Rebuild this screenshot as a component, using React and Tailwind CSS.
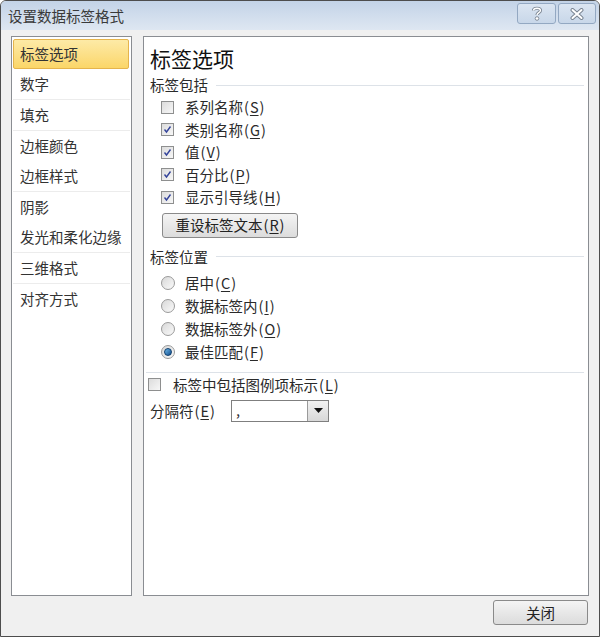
import React from "react";

const font = { fontFamily: '"Noto Sans CJK SC", "Noto Sans", sans-serif' };

const navItems = [
  { label: "标签选项", active: true, sep: false },
  { label: "数字", sep: true },
  { label: "填充", sep: true },
  { label: "边框颜色", sep: false },
  { label: "边框样式", sep: true },
  { label: "阴影", sep: false },
  { label: "发光和柔化边缘", sep: true },
  { label: "三维格式", sep: true },
  { label: "对齐方式", sep: false },
];

const checks = [
  { label: "系列名称", key: "S", checked: false },
  { label: "类别名称", key: "G", checked: true },
  { label: "值", key: "V", checked: true },
  { label: "百分比", key: "P", checked: true },
  { label: "显示引导线", key: "H", checked: true },
];

const radios = [
  { label: "居中", key: "C", on: false },
  { label: "数据标签内", key: "I", on: false },
  { label: "数据标签外", key: "O", on: false },
  { label: "最佳匹配", key: "F", on: true },
];

const Mn = ({ k }) => (
  <span className="ml-[1px]">
    (<span className="underline underline-offset-2 px-[1px]">{k}</span>)
  </span>
);

const Checkbox = ({ checked }) => (
  <div className="w-[13px] h-[13px] border border-[#8e8f8f] bg-gradient-to-br from-[#dcdcdc] to-[#f7f7f7] flex items-center justify-center shrink-0">
    {checked && (
      <svg width="9" height="9" viewBox="0 0 9 9">
        <path d="M1.5 4.5 L3.5 7 L7.5 1.5" fill="none" stroke="#34449a" strokeWidth="1.4" />
      </svg>
    )}
  </div>
);

const Radio = ({ on }) => (
  <div className="w-[14px] h-[14px] rounded-full border border-[#9a9a9a] bg-gradient-to-br from-[#d8d8d8] to-[#fafafa] flex items-center justify-center shrink-0">
    {on && (
      <div className="w-[8px] h-[8px] rounded-full bg-gradient-to-br from-[#6fb8e8] to-[#0f4f8f] border border-[#0d3d6d]" />
    )}
  </div>
);

const Section = ({ title }) => (
  <div className="h-[20px] flex items-center gap-[8px] pr-[4px]">
    <span className="text-[14.5px] text-[#2a2a2a]">{title}</span>
    <div className="flex-1 h-[1px] bg-[#dde2e8]" />
  </div>
);

const Btn = ({ children, className }) => (
  <div
    className={
      "h-[25px] flex items-center justify-center border border-[#8a8a8a] rounded-[3px] bg-gradient-to-b from-[#f4f4f4] to-[#dcdcdc] text-[14.5px] text-[#222] " +
      className
    }
  >
    {children}
  </div>
);

export default function App() {
  return (
    <div
      style={font}
      className="w-[600px] h-[637px] flex flex-col border border-[#4d4d4d] rounded-t-[6px] bg-[#f0f0f0] overflow-hidden"
    >
      <div className="h-[29px] shrink-0 flex items-center bg-gradient-to-b from-[#c3d3e7] to-[#dee7f2] pl-[7px] pr-[3px]">
        <span className="text-[14.5px] text-[#3a3a3a] flex-1">设置数据标签格式</span>
        <div className="flex gap-[2px] -mt-[4px]">
          <div className="w-[39px] h-[21px] rounded-[3px] border border-[#93a8c2] bg-gradient-to-b from-[#dbe5f1] to-[#c8d7e9] flex items-center justify-center">
            <svg width="12" height="15" viewBox="0 0 12 15">
              <path d="M2.5 4.5 C2.5 1.5 9.5 1.5 9.5 4.5 C9.5 6.5 6 6.8 6 9" fill="none" stroke="#7a8592" strokeWidth="3.2" />
              <path d="M2.5 4.5 C2.5 1.5 9.5 1.5 9.5 4.5 C9.5 6.5 6 6.8 6 9" fill="none" stroke="#ffffff" strokeWidth="1.4" />
              <circle cx="6" cy="12.5" r="1.8" fill="#ffffff" stroke="#7a8592" strokeWidth="0.9" />
            </svg>
          </div>
          <div className="w-[38px] h-[21px] rounded-[3px] border border-[#93a8c2] bg-gradient-to-b from-[#dbe5f1] to-[#c8d7e9] flex items-center justify-center">
            <svg width="14" height="12" viewBox="0 0 14 12">
              <path d="M2.5 2 L11.5 10 M11.5 2 L2.5 10" stroke="#7a8592" strokeWidth="4" strokeLinecap="round" />
              <path d="M2.5 2 L11.5 10 M11.5 2 L2.5 10" stroke="#ffffff" strokeWidth="2" strokeLinecap="round" />
            </svg>
          </div>
        </div>
      </div>

      <div className="flex-1 flex flex-col px-[10px] pt-[6px]">
        <div className="h-[560px] flex gap-[11px]">
          <div className="w-[121px] border border-[#8a8d92] bg-white pt-[2px] px-[1px]">
            {navItems.map((it) =>
              it.active ? (
                <div
                  key={it.label}
                  className="h-[30px] mr-[1px] flex items-center pl-[6px] rounded-[2px] border border-[#e5b44c] bg-gradient-to-b from-[#fdeaa6] to-[#fbd668] text-[14.5px] text-[#333]"
                >
                  {it.label}
                </div>
              ) : (
                <div
                  key={it.label}
                  className={
                    "h-[30px] flex items-center pl-[7px] text-[14.5px] text-[#333] " +
                    (it.sep ? "border-b border-[#ececec] box-content" : "")
                  }
                >
                  {it.label}
                </div>
              )
            )}
          </div>

          <div className="flex-1 border border-[#8a8d92] bg-white flex flex-col pl-[6px] pt-[8px]">
            <div className="h-[26px] text-[21px] leading-[26px] text-[#111]">标签选项</div>
            <div className="mt-[4px]">
              <Section title="标签包括" />
            </div>
            <div className="mt-[1px] flex flex-col pl-[11px]">
              {checks.map((c) => (
                <div key={c.key} className="h-[22.5px] flex items-center gap-[11px] text-[14.5px] text-[#2a2a2a]">
                  <Checkbox checked={c.checked} />
                  <span>
                    {c.label}
                    <Mn k={c.key} />
                  </span>
                </div>
              ))}
              <Btn className="mt-[4px] ml-[1px] w-[136px]">
                <span>
                  重设标签文本<Mn k="R" />
                </span>
              </Btn>
            </div>
            <div className="mt-[9px]">
              <Section title="标签位置" />
            </div>
            <div className="mt-[5px] flex flex-col pl-[11px]">
              {radios.map((r) => (
                <div key={r.key} className="h-[23px] flex items-center gap-[10px] text-[14.5px] text-[#2a2a2a]">
                  <Radio on={r.on} />
                  <span>
                    {r.label}
                    <Mn k={r.key} />
                  </span>
                </div>
              ))}
            </div>
            <div className="mt-[8px] -ml-[4px] mr-[4px] h-[1px] bg-[#dde2e8]" />
            <div className="mt-[1px] h-[22px] flex items-center gap-[12px] -ml-[2px] text-[14.5px] text-[#2a2a2a]">
              <Checkbox checked={false} />
              <span>
                标签中包括图例项标示<Mn k="L" />
              </span>
            </div>
            <div className="mt-[4px] h-[22px] flex items-center text-[14.5px] text-[#2a2a2a]">
              <span className="w-[81px]">
                分隔符<Mn k="E" />
              </span>
              <div className="w-[98px] h-[22px] border border-[#7f7f7f] bg-white flex items-stretch">
                <span className="flex-1 pl-[4px] leading-[18px]">,</span>
                <div className="w-[21px] border-l border-[#9a9a9a] bg-gradient-to-b from-[#f2f2f2] to-[#d8d8d8] flex items-center justify-center">
                  <svg width="9" height="5" viewBox="0 0 9 5">
                    <path d="M0 0 H9 L4.5 5 Z" fill="#111" />
                  </svg>
                </div>
              </div>
            </div>
          </div>
        </div>
        <div className="flex justify-end mt-[4px] pr-[1px]">
          <Btn className="w-[95px]">关闭</Btn>
        </div>
      </div>
    </div>
  );
}
